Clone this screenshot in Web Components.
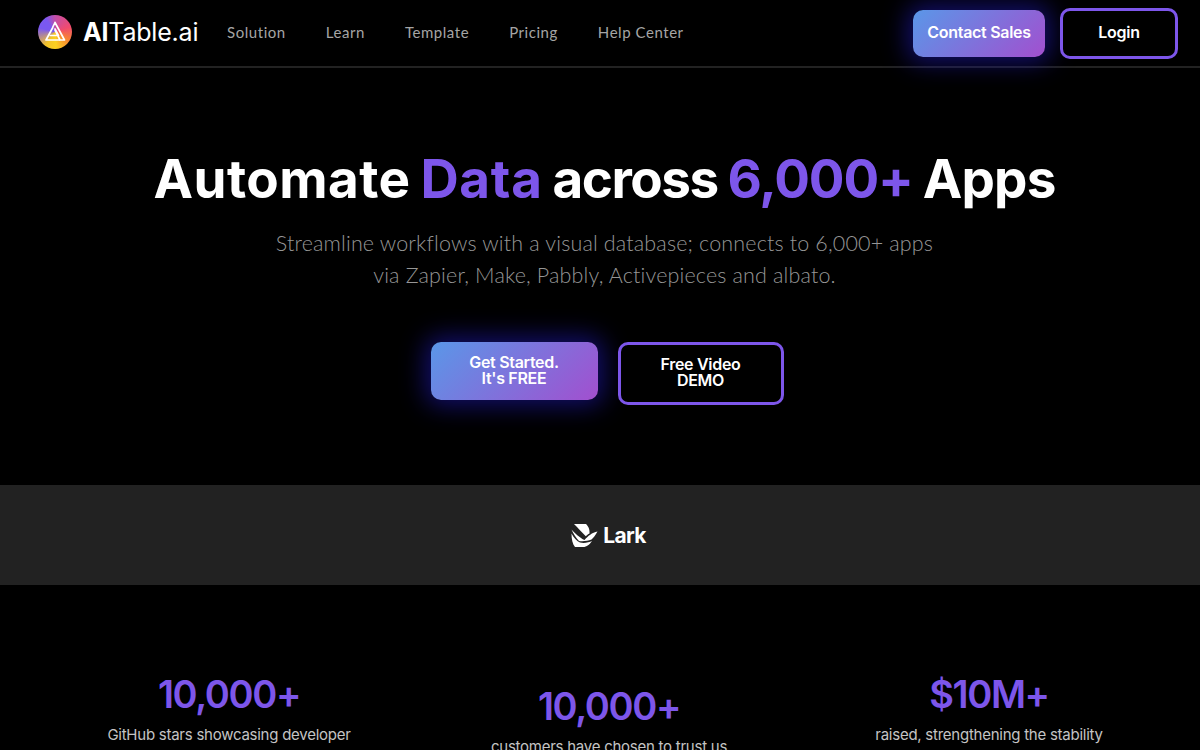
<!DOCTYPE html>
<html lang="en">
<head>
<meta charset="utf-8">
<title>AITable.ai</title>
<style>
  html, body { margin: 0; background: #000; overflow: hidden; height: 100%; }
  body { font-family: "Inter", "Liberation Sans", sans-serif; color: #fff; }
</style>
</head>
<body>
<site-header></site-header>
<hero-section></hero-section>
<logo-band></logo-band>
<stat-row>
  <stat-item value="10,000+">GitHub stars showcasing developer</stat-item>
  <stat-item value="10,000+" lowered>customers have chosen to trust us</stat-item>
  <stat-item value="$10M+">raised, strengthening the stability</stat-item>
</stat-row>

<script>
class CtaButton extends HTMLElement {
  constructor() {
    super()
    this.attachShadow({ mode: 'open' })
  }

  connectedCallback () {
    this.shadowRoot.innerHTML = `
      <style>
        :host {
          display: flex;
          align-items: center;
          justify-content: center;
          box-sizing: border-box;
          border-radius: 10px;
          font: 600 16px/16px "Inter", sans-serif;
          letter-spacing: -0.3px;
          text-align: center;
          color: #fff;
        }
        :host([variant=fill]) {
          background: linear-gradient(135deg, #5a97e8 0%, #a24fcf 100%);
          box-shadow: 0 0 24px 6px rgba(30, 24, 175, 0.6);
        }
        :host([variant=line]) {
          border: 3px solid #7d56ea;
          background: #000;
        }
      </style>
      <slot></slot>
    `
  }
}

class SiteHeader extends HTMLElement {
  constructor() {
    super()
    this.attachShadow({ mode: 'open' })
  }

  connectedCallback () {
    const links = ['Solution', 'Learn', 'Template', 'Pricing', 'Help Center']

    this.shadowRoot.innerHTML = `
      <style>
        :host {
          display: flex;
          align-items: center;
          box-sizing: border-box;
          height: 68px;
          padding: 0 22px 2px 38px;
          border-bottom: 2px solid #222;
        }
        .brand {
          display: flex;
          align-items: center;
          gap: 11px;
          width: 189px;
          font: 400 25px/1 "Inter", sans-serif;
          letter-spacing: -0.2px;
        }
        .brand b { font-weight: 700; }
        .mark {
          flex: none;
          width: 34px;
          height: 34px;
          border-radius: 50%;
          background: conic-gradient(#c24fa8, #f04a70 70deg, #f88a30 125deg, #fcd020 175deg, #f4c428 215deg, #7a58f0 285deg, #7a58f0 325deg, #c24fa8);
        }
        .mark svg { display: block; }
        nav {
          display: flex;
          gap: 40px;
          font: 400 15px/1 "Lato", sans-serif;
          color: #a5a5a5;
          letter-spacing: 0.55px;
        }
        .actions {
          display: flex;
          align-items: center;
          gap: 15px;
          margin: 2px 0 0 auto;
        }
        .contact { width: 132px; height: 47px; padding-bottom: 2px; }
        .login { width: 118px; height: 51px; padding-bottom: 2px; }
      </style>
      <div class="brand">
        <div class="mark">
          <svg width="34" height="34" viewBox="0 0 34 34">
            <path d="M17 7.5 L26.5 25 H8 L14.8 12.5 M17 7.5 L14.8 12 M17 15 L22 25 M12.5 20.5 H20.5 L17 14" fill="none" stroke="#fff" stroke-width="1.7" stroke-linejoin="round" stroke-linecap="round"/>
          </svg>
        </div>
        <span><b>AI</b>Table.ai</span>
      </div>
      <nav>${links.map((link) => `<span>${link}</span>`).join('')}</nav>
      <div class="actions">
        <cta-button class="contact" variant="fill">Contact Sales</cta-button>
        <cta-button class="login" variant="line">Login</cta-button>
      </div>
    `
  }
}

class HeroSection extends HTMLElement {
  constructor() {
    super()
    this.attachShadow({ mode: 'open' })
  }

  connectedCallback () {
    this.shadowRoot.innerHTML = `
      <style>
        :host {
          display: flex;
          flex-direction: column;
          align-items: center;
          box-sizing: border-box;
          height: 417px;
          padding: 79px 0 0 9px;
        }
        h1 {
          margin: 0;
          font: 700 53px/64px "Inter", sans-serif;
          letter-spacing: -0.8px;
          word-spacing: -2px;
          white-space: nowrap;
        }
        h1 em { font-style: normal; color: #7d56ea; }
        .first { letter-spacing: 0.45px; }
        .data { letter-spacing: 0.7px; }
        .across { letter-spacing: -1.47px; }
        .count { letter-spacing: -1.13px; }
        p {
          margin: 16px 0 0;
          font: 300 21.5px/32px "Lato", sans-serif;
          letter-spacing: 0.15px;
          color: #969696;
          text-align: center;
        }
        .buttons {
          display: flex;
          align-items: flex-start;
          gap: 20px;
          margin: 51px 0 0 5px;
        }
        .start { width: 167px; height: 58px; padding-bottom: 2px; }
        .demo { width: 166px; height: 63px; padding-bottom: 4px; }
      </style>
      <h1><span class="first">Automate</span> <em class="data">Data</em> <span class="across">across</span> <em class="count">6,000+</em> Apps</h1>
      <p>Streamline workflows with a visual database; connects to 6,000+ apps<br>via Zapier, Make, Pabbly, Activepieces and albato.</p>
      <div class="buttons">
        <cta-button class="start" variant="fill">Get Started.<br>It's FREE</cta-button>
        <cta-button class="demo" variant="line">Free Video<br>DEMO</cta-button>
      </div>
    `
  }
}

class LogoBand extends HTMLElement {
  constructor() {
    super()
    this.attachShadow({ mode: 'open' })
  }

  connectedCallback () {
    this.shadowRoot.innerHTML = `
      <style>
        :host {
          display: flex;
          align-items: center;
          justify-content: center;
          gap: 5px;
          height: 100px;
          padding-left: 17px;
          background: #222;
          font: 700 21px/1 "Inter", sans-serif;
          letter-spacing: -0.6px;
        }
        svg { flex: none; }
      </style>
      <svg width="27" height="24" viewBox="0 0 27 24">
        <path d="M3 1 H15 C17 3 19 6 18.5 10.5 C17 11 15.8 12.2 14.8 13.2 C11 9.5 7 5 3 1 Z" fill="#fff"/>
        <path d="M0.5 6.5 C4 10.5 9 15 13.5 17 C17 13 21 9.5 26.5 8.5 C24.5 12 22.5 15 20.5 16.5 C17 18 12 18.5 8 18 C5 15 2.5 11 0.5 6.5 Z" fill="#fff"/>
        <path d="M0.5 10.5 C3 15 6 18.5 9 19.5 C13 20.5 18 19.5 21 18 C18.5 21.5 16 24 12 24 H4 C1.5 21 0.5 16 0.5 10.5 Z" fill="#fff"/>
      </svg>
      <span>Lark</span>
    `
  }
}

class StatRow extends HTMLElement {
  constructor() {
    super()
    this.attachShadow({ mode: 'open' })
  }

  connectedCallback () {
    this.shadowRoot.innerHTML = `
      <style>
        :host {
          display: grid;
          grid-template-columns: repeat(3, 380px);
          justify-content: center;
          padding: 83px 0 0 18px;
        }
      </style>
      <slot></slot>
    `
  }
}

class StatItem extends HTMLElement {
  constructor() {
    super()
    this.attachShadow({ mode: 'open' })
  }

  connectedCallback () {
    this.shadowRoot.innerHTML = `
      <style>
        :host {
          display: flex;
          flex-direction: column;
          align-items: center;
        }
        :host([lowered]) { padding-top: 12px; }
        strong {
          font: 600 38px/52px "Inter", sans-serif;
          letter-spacing: -1.4px;
          color: #7d56ea;
        }
        span {
          margin-top: 3px;
          font: 400 15px/24px "Inter", sans-serif;
          letter-spacing: -0.25px;
          color: #c4c4c4;
          white-space: nowrap;
        }
      </style>
      <strong>${this.getAttribute('value')}</strong>
      <span><slot></slot></span>
    `
  }
}

customElements.define('cta-button', CtaButton)
customElements.define('site-header', SiteHeader)
customElements.define('hero-section', HeroSection)
customElements.define('logo-band', LogoBand)
customElements.define('stat-row', StatRow)
customElements.define('stat-item', StatItem)
</script>
</body>
</html>
